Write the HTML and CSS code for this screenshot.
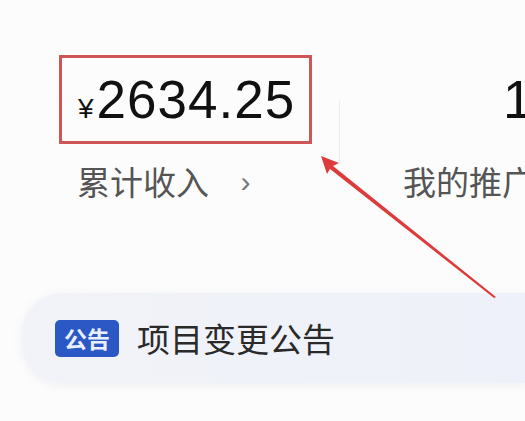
FILE: index.html
```html
<!DOCTYPE html>
<html lang="zh-CN">
<head>
  <meta charset="UTF-8" />
  <meta name="viewport" content="width=device-width, initial-scale=1.0"/>
  <title>累计收入</title>
  <link rel="stylesheet" href="styles.css">
</head>
<body>

  <div class="page">
    <div class="stats">
      <div class="stat income">
        <div class="amount-box">
          <span class="currency">¥</span><span class="amount">2634.25</span>
        </div>
        <div class="label">累计收入 <span class="chevron">›</span></div>
      </div>

      <div class="divider"></div>

      <div class="stat promo">
        <div class="count">1</div>
        <div class="label">我的推广</div>
      </div>
    </div>

    <div class="notice">
      <span class="badge">公告</span>
      <span class="notice-text">项目变更公告</span>
    </div>

    <!-- annotation arrow pointing at the amount -->
    <svg class="arrow" width="525" height="421" viewBox="0 0 525 421">
      <polygon points="321,156 339,163 333,166 496,297 494,298 330,169 327,174" fill="#dd3b3b"/>
    </svg>
  </div>

</body>
</html>
```

FILE: styles.css
```css
body {
  margin: 0;
  padding: 0;
  background-color: #fcfcfc;
  font-family: 'Liberation Sans', 'Noto Sans CJK SC', sans-serif;
  color: #111;
}

.page {
  position: relative;
  width: 525px;
  height: 421px;
  overflow: hidden;
}

.stats {
  display: flex;
  padding-top: 55px;
  height: 215px;
  box-sizing: border-box;
}

.income {
  flex-shrink: 0;
  padding-left: 59px;
  width: 280px;
}

.amount-box {
  display: flex;
  align-items: baseline;
  width: 253px;
  height: 89px;
  box-sizing: border-box;
  border: 3px solid #cf5656;
  padding-left: 16px;
  padding-top: 11px;
}

.currency {
  font-size: 28px;
  margin-right: 3px;
}

.amount {
  font-size: 53px;
  letter-spacing: 1px;
}

.label {
  margin-top: 17px;
  padding-left: 18px;
  font-family: 'Noto Sans CJK SC', sans-serif;
  font-size: 33px;
  line-height: 40px;
  color: #555;
}

.chevron {
  font-family: 'Liberation Sans', sans-serif;
  font-size: 30px;
  color: #777;
  margin-left: 24px;
  vertical-align: 3px;
}

.divider {
  flex-shrink: 0;
  width: 1px;
  height: 62px;
  margin-top: 45px;
  background-color: #ececec;
}

.promo {
  padding-left: 45px;
  flex: 1;
  min-width: 0;
  white-space: nowrap;
}

.count {
  height: 89px;
  padding-top: 14px;
  padding-left: 118px;
  box-sizing: border-box;
  font-size: 53px;
  font-weight: 500;
}

.promo .label {
  padding-left: 18px;
}

.notice {
  display: flex;
  align-items: center;
  gap: 18px;
  margin-top: 78px;
  margin-left: 22px;
  height: 90px;
  padding-left: 33px;
  border-radius: 40px 0 0 40px;
  background: linear-gradient(90deg, #f1f3f8, #eef1f9);
  box-shadow: 0 2px 8px rgba(200, 205, 220, 0.25);
}

.badge {
  display: inline-block;
  width: 64px;
  height: 37px;
  line-height: 37px;
  text-align: center;
  background-color: #2b58c4;
  color: #e8f0ff;
  border-radius: 5px;
  font-family: 'Noto Sans CJK SC', sans-serif;
  font-weight: bold;
  font-size: 23px;
}

.notice-text {
  font-family: 'Noto Sans CJK SC', sans-serif;
  font-size: 33px;
  color: #2a2a2a;
}

.arrow {
  position: absolute;
  left: 0;
  top: 0;
}
```
